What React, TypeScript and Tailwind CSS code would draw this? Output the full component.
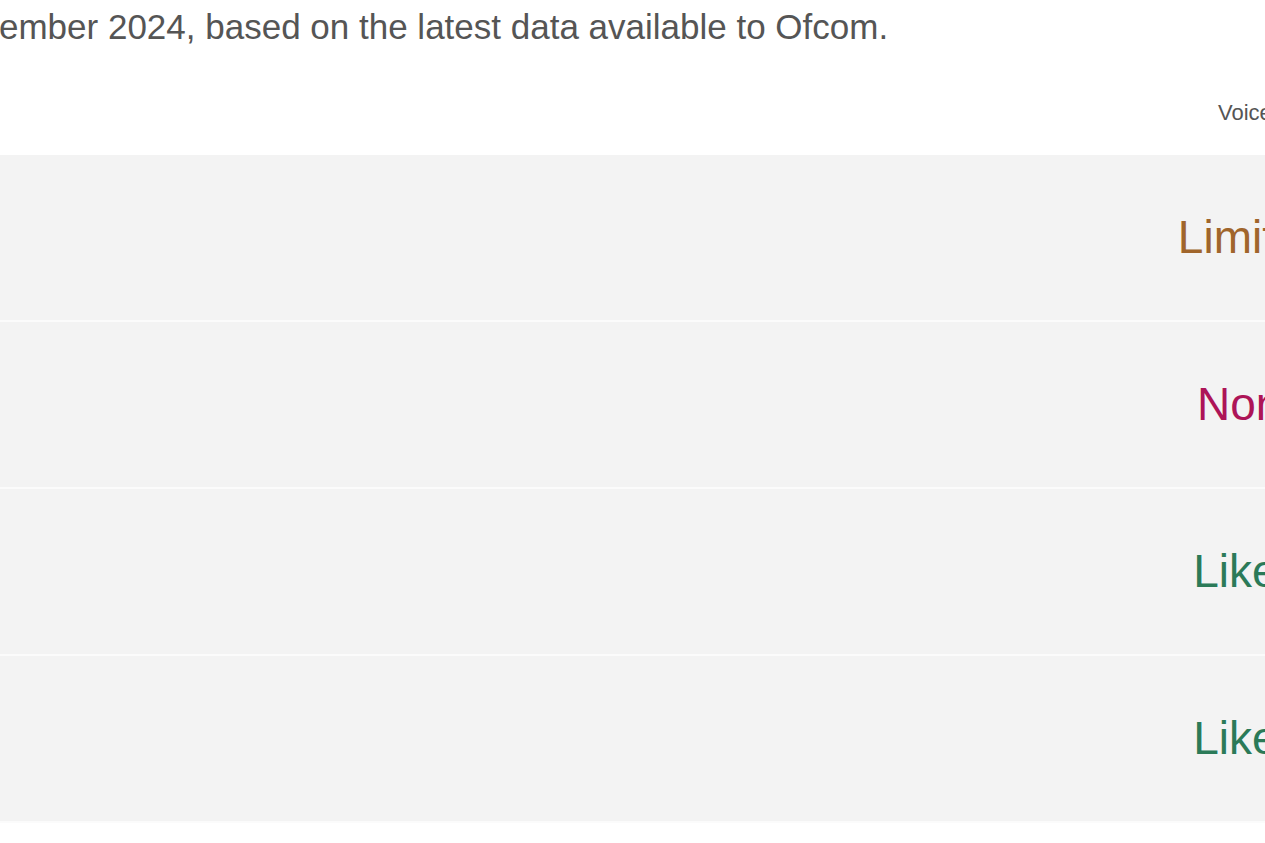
export default function App() {
  const rows = [
    { label: 'Limited', color: 'text-[#a0652b]' },
    { label: 'None', color: 'text-[#ad1457]' },
    { label: 'Likely', color: 'text-[#2b7a58]' },
    { label: 'Likely', color: 'text-[#2b7a58]' },
  ];

  return (
    <div className="w-[1265px] h-[843px] overflow-hidden bg-white font-['Liberation_Sans',Arial,sans-serif]">
      {/* intro line */}
      <p className="pt-[7px] -ml-[1px] text-[35px] leading-[40px] text-[#555] whitespace-nowrap">
        ember 2024, based on the latest data available to Ofcom.
      </p>

      <div className="w-[1400px]">
        {/* header */}
        <div className="grid grid-cols-[1152px_200px] h-[108px] items-end pb-[30px]">
          <div />
          <div className="pl-[66px] text-[22px] leading-[25px] text-[#555] whitespace-nowrap">Voice</div>
        </div>

        {/* rows */}
        {rows.map((row, i) => (
          <div
            key={i}
            className="grid grid-cols-[1152px_200px] h-[167px] items-center bg-[#f3f3f3] border-b-2 border-[#fbfbfb]"
          >
            <div />
            <div className={`text-center text-[46px] leading-[53px] whitespace-nowrap ${row.color}`}>
              {row.label}
            </div>
          </div>
        ))}
      </div>
    </div>
  );
}
